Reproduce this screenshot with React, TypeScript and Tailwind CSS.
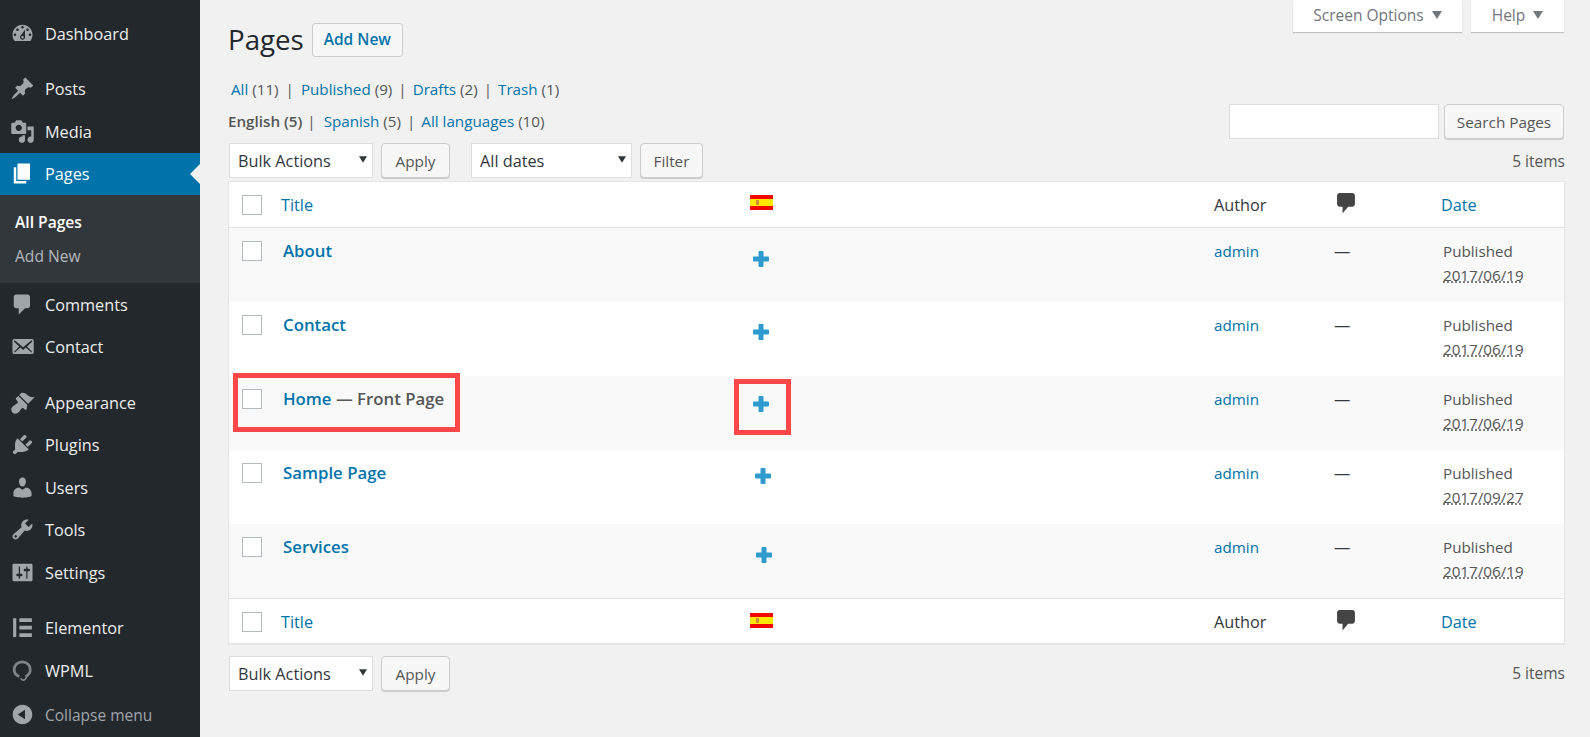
// WordPress "Pages" list with WPML columns.

const ICONS = {
  dashboard:
    "M3.76 16h12.48c1.1-1.37 1.76-3.11 1.76-5 0-4.42-3.58-8-8-8s-8 3.58-8 8c0 1.89.66 3.63 1.76 5zM10 4c.55 0 1 .45 1 1s-.45 1-1 1-1-.45-1-1 .45-1 1-1zM6 6c.55 0 1 .45 1 1s-.45 1-1 1-1-.45-1-1 .45-1 1-1zm8 0c.55 0 1 .45 1 1s-.45 1-1 1-1-.45-1-1 .45-1 1-1zm-5.37 5.55L12 7v6c0 1.1-.9 2-2 2s-2-.9-2-2c0-.57.24-1.08.63-1.45zM4 10c.55 0 1 .45 1 1s-.45 1-1 1-1-.45-1-1 .45-1 1-1zm12 0c.55 0 1 .45 1 1s-.45 1-1 1-1-.45-1-1 .45-1 1-1zm-5 3c0-.55-.45-1-1-1s-1 .45-1 1 .45 1 1 1 1-.45 1-1z",
  post: "M10.44 3.02l1.82-1.82 6.36 6.35-1.83 1.82c-1.05-.68-2.48-.57-3.41.36l-.75.75c-.92.93-1.04 2.35-.35 3.41l-1.83 1.82-2.41-2.41-2.8 2.79c-.42.42-3.38 2.71-3.8 2.29s1.86-3.39 2.28-3.81l2.79-2.79L4.1 9.36l1.83-1.82c1.05.69 2.48.57 3.4-.36l.75-.75c.93-.92 1.05-2.35.36-3.41z",
  media:
    "M13 11V4c0-.55-.45-1-1-1h-1.67L9 1H5L3.67 3H2c-.55 0-1 .45-1 1v7c0 .55.45 1 1 1h10c.55 0 1-.45 1-1zM7 4.5c1.38 0 2.5 1.12 2.5 2.5S8.38 9.5 7 9.5 4.5 8.38 4.5 7 5.62 4.5 7 4.5zM14 6h5v10.5c0 1.38-1.12 2.5-2.5 2.5S14 17.88 14 16.5s1.12-2.5 2.5-2.5c.17 0 .34.02.5.05V9h-3V6zm-4 8.05V13h2v3.5c0 1.38-1.12 2.5-2.5 2.5S7 17.88 7 16.5 8.12 14 9.5 14c.17 0 .34.02.5.05z",
  page: "M6 15V2h10v13H6zm-1 1h8v2H3V5h2v11z",
  comment: "M5 2h9c1.1 0 2 .9 2 2v7c0 1.1-.9 2-2 2h-2l-5 5v-5H5c-1.1 0-2-.9-2-2V4c0-1.1.9-2 2-2z",
  mail: "M19 14.5v-9c0-.83-.67-1.5-1.5-1.5H3.49c-.83 0-1.5.67-1.5 1.5v9c0 .83.67 1.5 1.5 1.5H17.5c.83 0 1.5-.67 1.5-1.5zm-1.31-9.11c.33.33.15.67-.03.84L13.6 9.95l3.9 4.06c.12.14.2.36.06.51-.13.16-.43.15-.56.05l-4.37-3.73-2.14 1.95-2.13-1.95-4.37 3.73c-.13.1-.43.11-.56-.05-.14-.15-.06-.37.06-.51l3.9-4.06-4.06-3.72c-.18-.17-.36-.51-.03-.84s.67-.17.95.07l6.24 5.04 6.25-5.04c.28-.24.62-.4.95-.07z",
  brush:
    "M14.48 11.06L7.41 3.99l1.5-1.5c.5-.56 2.3-.47 3.51.32 1.21.8 1.43 1.28 2.91 2.1 1.18.64 2.45 1.26 4.45.85zm-.71.71L6.7 4.7 4.93 6.47c-.39.39-.39 1.02 0 1.41l1.06 1.06c.39.39.39 1.03 0 1.42-.6.6-1.43 1.11-2.21 1.69-.35.26-.7.53-1.01.84C1.43 13.71 1 14.62 1 15.63c0 .92.37 1.75.97 2.35.6.6 1.43.97 2.35.97 1.01 0 1.92-.43 2.55-1.12.31-.31.58-.66.84-1.01.58-.78 1.09-1.61 1.69-2.21.39-.39 1.03-.39 1.42 0l1.06 1.06c.39.39 1.02.39 1.41 0z",
  plugin:
    "M13.11 4.36L9.87 7.6 8 5.73l3.24-3.24c.35-.34 1.05-.2 1.56.32.52.51.66 1.21.31 1.55zm-8 1.77l.91-1.12 9.01 9.01-1.19.84c-.71.71-2.63 1.16-3.82 1.16H6.14L4.9 17.26c-.59.59-1.54.59-2.12 0-.59-.58-.59-1.53 0-2.12l1.24-1.24v-3.88c0-1.13.4-3.19 1.09-3.89zm7.26 3.97l3.24-3.24c.34-.35 1.04-.21 1.55.31.52.51.66 1.21.31 1.55l-3.24 3.25z",
  users:
    "M10 9.25c-2.27 0-2.73-3.44-2.73-3.44C7 4.02 7.82 2 9.97 2c2.16 0 2.98 2.02 2.71 3.81 0 0-.41 3.44-2.68 3.44zm0 2.57L12.72 10c2.39 0 4.52 2.33 4.52 4.53v2.49s-3.65 1.13-7.24 1.13c-3.65 0-7.24-1.13-7.24-1.13v-2.49c0-2.25 1.94-4.48 4.47-4.48z",
  tools:
    "M16.68 9.77c-1.34 1.34-3.3 1.67-4.95.99l-5.41 6.52c-.99.99-2.59.99-3.58 0s-.99-2.59 0-3.57l6.52-5.42c-.68-1.65-.35-3.61.99-4.95 1.28-1.28 3.12-1.62 4.72-1.06l-2.89 2.89 2.82 2.82 2.86-2.87c.53 1.58.18 3.39-1.08 4.65zM3.81 16.21c.4.39 1.04.39 1.43 0 .4-.4.4-1.04 0-1.43-.39-.4-1.03-.4-1.43 0-.39.39-.39 1.03 0 1.43z",
  settings:
    "M18 16V4c0-.55-.45-1-1-1H3c-.55 0-1 .45-1 1v12c0 .55.45 1 1 1h14c.55 0 1-.45 1-1zM8 11h1c.55 0 1 .45 1 1s-.45 1-1 1H8v1.5c0 .28-.22.5-.5.5s-.5-.22-.5-.5V13H6c-.55 0-1-.45-1-1s.45-1 1-1h1V5.5c0-.28.22-.5.5-.5s.5.22.5.5V11zm5-2h-1c-.55 0-1-.45-1-1s.45-1 1-1h1V5.5c0-.28.22-.5.5-.5s.5.22.5.5V7h1c.55 0 1 .45 1 1s-.45 1-1 1h-1v5.5c0 .28-.22.5-.5.5s-.5-.22-.5-.5V9z",
  elementor: "M2.500 2.500h2.500v15H2.500zM7.500 2.500h10v3h-10zM7.500 8.500h10v3h-10zM7.500 14.500h10v3h-10z",
  collapse: "M10 2.16c4.33 0 7.84 3.51 7.84 7.84s-3.51 7.84-7.84 7.84S2.16 14.33 2.16 10 5.71 2.16 10 2.16zm2 11.72V6.12L6.18 9.97z",
}

function Dashicon({ d, className }: { d: string; className?: string }) {
  return (
    <svg viewBox="0 0 20 20" className={className} fill="currentColor" fillRule="evenodd">
      <path d={d} />
    </svg>
  )
}

function WpmlIcon({ className }: { className?: string }) {
  return (
    <svg viewBox="0 0 20 20" className={className} fill="none" stroke="#80858a">
      <path strokeWidth="2.2" d="M7.500 14.800C4.900 13.900 3.300 11.800 3.300 9.200 3.300 5.500 6.200 3 9.800 3s6.400 2.500 6.400 6.200c0 2.500-1.400 4.600-3.600 5.600" />
      <path strokeWidth="1.300" d="M12.800 13.500c.5 1.600.2 3.800-1.800 4.200-1.300.2-2.100-.6-2.400-1.500" />
    </svg>
  )
}

function MenuItem({ icon, label, active }: { icon: React.ReactNode; label: string; active?: boolean }) {
  return (
    <a
      className={
        active
          ? "relative flex h-[42.5px] items-center bg-[#0073aa] text-white"
          : "flex h-[42.5px] items-center text-[#eeeeee]"
      }
    >
      <span className={active ? "flex w-[45px] justify-center text-white" : "flex w-[45px] justify-center text-[#a0a5aa]"}>
        {icon}
      </span>
      <span className="pt-[1px] text-[16.25px]">{label}</span>
      {active && (
        <span className="absolute top-[11px] right-0 h-0 w-0 border-y-[10px] border-r-[10px] border-y-transparent border-r-[#f1f1f1]" />
      )}
    </a>
  )
}

function Sidebar() {
  const ic = "h-[25px] w-[25px]"
  return (
    <aside className="h-full w-[200px] shrink-0 bg-[#23282d] pt-[12px]">
      <MenuItem icon={<Dashicon d={ICONS.dashboard} className={ic} />} label="Dashboard" />
      <div className="h-[13px]" />
      <MenuItem icon={<Dashicon d={ICONS.post} className={ic} />} label="Posts" />
      <MenuItem icon={<Dashicon d={ICONS.media} className={ic} />} label="Media" />
      <MenuItem icon={<Dashicon d={ICONS.page} className={ic} />} label="Pages" active />
      <div className="h-[88px] bg-[#32373c] pt-[11px] text-[15.6px]">
        <div className="flex h-[33px] items-center pl-[15px] font-semibold text-white">All Pages</div>
        <div className="flex h-[35px] items-center pl-[15px] text-[#b4b9be]">Add New</div>
      </div>
      <MenuItem icon={<Dashicon d={ICONS.comment} className={ic} />} label="Comments" />
      <MenuItem icon={<Dashicon d={ICONS.mail} className={ic} />} label="Contact" />
      <div className="h-[13px]" />
      <MenuItem icon={<Dashicon d={ICONS.brush} className={ic} />} label="Appearance" />
      <MenuItem icon={<Dashicon d={ICONS.plugin} className={ic} />} label="Plugins" />
      <MenuItem icon={<Dashicon d={ICONS.users} className={ic} />} label="Users" />
      <MenuItem icon={<Dashicon d={ICONS.tools} className={ic} />} label="Tools" />
      <MenuItem icon={<Dashicon d={ICONS.settings} className={ic} />} label="Settings" />
      <div className="h-[13px]" />
      <MenuItem icon={<Dashicon d={ICONS.elementor} className={ic} />} label="Elementor" />
      <MenuItem icon={<WpmlIcon className={ic} />} label="WPML" />
      <div className="mt-[2px] flex h-[42.5px] items-center text-[#a0a5aa]">
        <span className="flex w-[45px] justify-center">
          <Dashicon d={ICONS.collapse} className={ic} />
        </span>
        <span className="pt-[1px] text-[15.5px]">Collapse menu</span>
      </div>
    </aside>
  )
}

function Caret({ className }: { className?: string }) {
  return (
    <svg viewBox="0 0 10 8" className={className} fill="currentColor">
      <path d="M0 0h10L5 8z" />
    </svg>
  )
}

function Select({ label, width }: { label: string; width: string }) {
  return (
    <div className={`ml-[1px] flex h-[35px] items-center justify-between border border-[#dddddd] bg-white pr-[5px] pl-[8px] text-[16.25px] text-[#32373c] ${width}`}>
      <span className="pt-[1px]">{label}</span>
      <Caret className="mb-[3px] h-[7px] w-[8px] text-[#32373c]" />
    </div>
  )
}

function Btn({ label, className }: { label: string; className?: string }) {
  return (
    <button
      className={`flex h-[35px] items-center justify-center rounded-[4px] border border-[#cccccc] bg-[#f7f7f7] pt-[2px] text-[15.3px] text-[#555555] shadow-[0_1px_0_#cccccc] ${className ?? ""}`}
    >
      {label}
    </button>
  )
}

function Checkbox() {
  return <span className="block h-[20px] w-[20px] border border-[#b4b9be] bg-white" />
}

function Flag() {
  return (
    <svg viewBox="0 0 23 15" className="h-[15px] w-[23px]">
      <rect width="23" height="15" fill="#f10600" />
      <rect y="4" width="23" height="7" fill="#ffe800" />
      <rect x="6" y="5" width="3" height="5" rx="1" fill="#d08a3a" />
    </svg>
  )
}

function Plus({ className }: { className?: string }) {
  return (
    <svg viewBox="0 0 16 16" className={`h-4 w-4 ${className ?? ""}`} fill="#2e9acd">
      <path d="M5.500 1C5.500.5 6 0 6.500 0h3c.5 0 1 .5 1 1v4.500H15c.5 0 1 .5 1 1v3c0 .5-.5 1-1 1h-4.500V15c0 .5-.5 1-1 1h-3c-.5 0-1-.5-1-1v-4.500H1c-.5 0-1-.5-1-1v-3c0-.5.5-1 1-1h4.500z" />
    </svg>
  )
}

function CommentBubble() {
  return (
    <svg viewBox="0 0 17 20" className="h-[21px] w-[18px]" fill="#444444">
      <path d="M2.500 0h12C15.900 0 17 1.100 17 2.500v8c0 1.400-1.100 2.500-2.500 2.500h-4L5.200 19.500V13H2.500C1.100 13 0 11.900 0 10.500v-8C0 1.100 1.100 0 2.500 0z" />
    </svg>
  )
}

const COLS = "grid grid-cols-[52px_469px_464px_120px_107px_1fr]"

function HeadRow({ footer }: { footer?: boolean }) {
  return (
    <div className={footer ? `${COLS} h-[46px] border-t border-[#e1e1e1]` : `${COLS} h-[46px] border-b border-[#e1e1e1]`}>
      <div className="pt-[13px] pl-[13px]">
        <Checkbox />
      </div>
      <a className="pt-[11px] text-[16.25px] text-[#0073aa]">Title</a>
      <div className={footer ? "pt-[14px]" : "pt-[13px]"}>
        <Flag />
      </div>
      <div className="pt-[11px] text-[16.25px] text-[#32373c]">Author</div>
      <div className="pt-[11px] pl-[3px]">
        <CommentBubble />
      </div>
      <a className="pt-[11px] text-[16.25px] text-[#0073aa]">Date</a>
    </div>
  )
}

const ROWS = [
  { title: "About", date: "2017/06/19", plus: "mt-[23px] ml-[3px]", bg: "bg-[#f9f9f9]" },
  { title: "Contact", date: "2017/06/19", plus: "mt-[22px] ml-[3px]", bg: "bg-white" },
  { title: "Home", state: "Front Page", date: "2017/06/19", plus: "mt-[20px] ml-[3px]", bg: "bg-[#f9f9f9]" },
  { title: "Sample Page", date: "2017/09/27", plus: "mt-[18px] ml-[5px]", bg: "bg-white" },
  { title: "Services", date: "2017/06/19", plus: "mt-[23px] ml-[6px]", bg: "bg-[#f9f9f9]" },
]

function PageRow({ row }: { row: (typeof ROWS)[number] }) {
  return (
    <div className={`${COLS} relative h-[74px] ${row.bg}`}>
      <div className="pt-[13px] pl-[13px]">
        <Checkbox />
      </div>
      <div className="pt-[10px] pl-[2px] text-[16.8px] font-semibold text-[#555555]">
        <a className="text-[#0073aa]">{row.title}</a>
        {row.state && <span> — {row.state}</span>}
      </div>
      <div>
        <Plus className={row.plus} />
      </div>
      <a className="pt-[12px] text-[15.2px] text-[#0073aa]">admin</a>
      <div className="pt-[11px] text-[16.25px] text-[#32373c]">—</div>
      <div className="pt-[11px] pl-[2px] text-[15.2px] leading-[24px] text-[#555555]">
        <div>Published</div>
        <span className="underline decoration-dotted">{row.date}</span>
      </div>
      {row.state && (
        <>
          <span className="absolute top-[-3px] left-[4px] h-[59px] w-[227px] border-[5px] border-[#fb4747]" />
          <span className="absolute top-[3px] left-[505px] h-[56px] w-[57px] border-[5px] border-[#fb4747]" />
        </>
      )}
    </div>
  )
}

function Sep({ className }: { className: string }) {
  return <span className={className}>|</span>
}

export default function App() {
  return (
    <div className="flex h-[737px] w-[1590px] overflow-hidden bg-[#f1f1f1] font-['Open_Sans','Noto_Sans',sans-serif]">
      <Sidebar />
      <main className="flex-1 pr-[25px] pl-[28px]">
        <div className="-mb-[9px] mr-[1px] flex justify-end gap-[9px]">
          <div className="flex h-[32px] w-[169px] items-center justify-center gap-[8px] bg-white text-[15.5px] text-[#72777c] shadow-[0_1px_1px_rgba(0,0,0,0.2)]">
            Screen Options <Caret className="mb-[3px] h-[8px] w-[10px]" />
          </div>
          <div className="flex h-[32px] w-[93px] items-center justify-center gap-[8px] bg-white text-[15.5px] text-[#72777c] shadow-[0_1px_1px_rgba(0,0,0,0.2)]">
            Help <Caret className="mb-[3px] h-[8px] w-[10px]" />
          </div>
        </div>

        <div className="flex h-[34px] items-center">
          <h1 className="text-[27.7px] text-[#23282d]">Pages</h1>
          <button className="ml-[8px] h-[34px] w-[91px] rounded-[3px] border border-[#cccccc] bg-[#f7f7f7] text-[15.5px] font-semibold text-[#0073aa]">
            Add New
          </button>
        </div>

        <div className="mt-[21px] flex h-[24px] items-center pb-[2px] pl-[3px] text-[15.2px] whitespace-pre text-[#555555]">
          <a className="text-[#0073aa]">All</a> (11)<Sep className="mx-[7px]" />
          <a className="text-[#0073aa]">Published</a> (9)<Sep className="mx-[6px]" />
          <a className="text-[#0073aa]">Drafts</a> (2)<Sep className="mx-[6px]" />
          <a className="text-[#0073aa]">Trash</a> (1)
        </div>

        <div className="mt-[2px] flex h-[35px] items-center justify-between">
          <div className="flex text-[15.2px] whitespace-pre text-[#555555]">
            <b className="font-semibold">English (5)</b><Sep className="mr-[8px] ml-[5px]" />
            <a className="text-[#0073aa]">Spanish</a> (5)<Sep className="mx-[6px]" />
            <a className="text-[#0073aa]">All languages</a> (10)
          </div>
          <div className="mr-[1px] flex gap-[5px]">
            <div className="h-[35px] w-[210px] border border-[#dddddd] bg-white" />
            <Btn label="Search Pages" className="w-[120px]" />
          </div>
        </div>

        <div className="mt-[4px] flex h-[35px] items-center">
          <Select label="Bulk Actions" width="w-[144px]" />
          <Btn label="Apply" className="ml-[8px] w-[69px]" />
          <div className="ml-[20px]">
            <Select label="All dates" width="w-[161px]" />
          </div>
          <Btn label="Filter" className="ml-[8px] w-[63px]" />
          <span className="mt-[3px] ml-auto text-[15.5px] text-[#555555]">5 items</span>
        </div>

        <section className="mt-[3px] h-[463px] border border-[#e5e5e5] bg-white shadow-[0_1px_1px_rgba(0,0,0,0.04)]">
          <HeadRow />
          {ROWS.map((r) => (
            <PageRow key={r.title} row={r} />
          ))}
          <HeadRow footer />
        </section>

        <div className="mt-[12px] flex h-[35px] items-center">
          <Select label="Bulk Actions" width="w-[144px]" />
          <Btn label="Apply" className="ml-[8px] w-[69px]" />
          <span className="ml-auto text-[15.5px] text-[#555555]">5 items</span>
        </div>
      </main>
    </div>
  )
}
